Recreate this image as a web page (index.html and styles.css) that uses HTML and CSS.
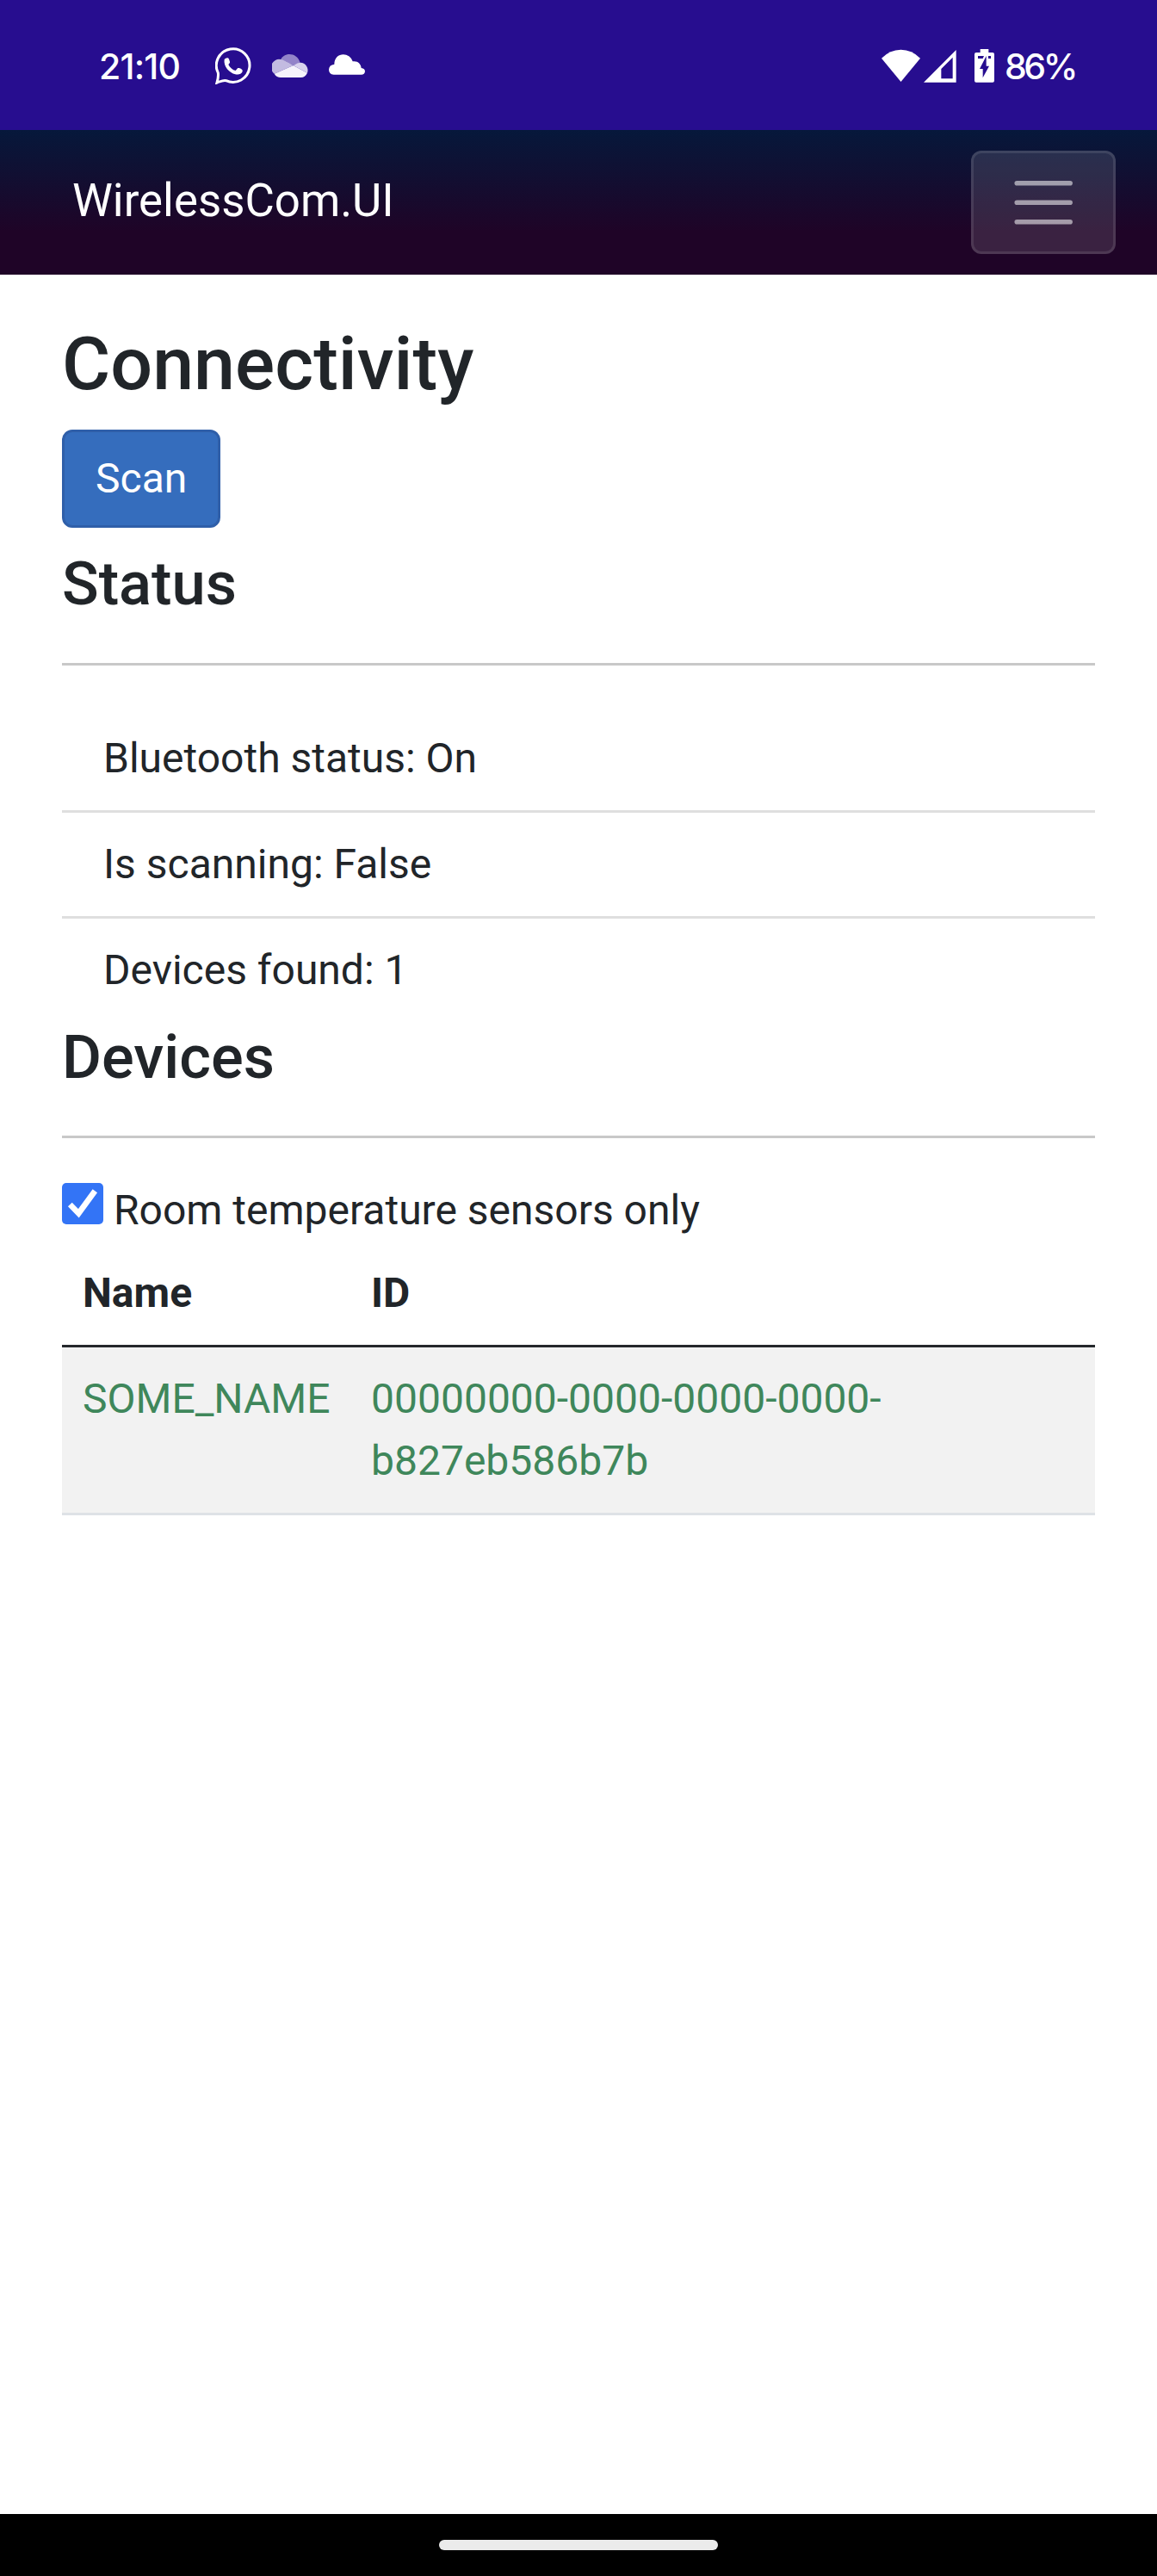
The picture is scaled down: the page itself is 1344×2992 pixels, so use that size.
FILE: index.html
```html
<!DOCTYPE html>
<html lang="en">
<head>
<meta charset="utf-8">
<title>Connectivity</title>
<link rel="stylesheet" href="styles.css">
</head>
<body>
<div class="status-bar">
  <div class="status-left">
    <span class="clock">21:10</span>
    <svg class="ico-app" viewBox="480 39 126 135" fill="none">
      <path d="M486 168Q492 147 490 134A58 58 0 1 1 518 161Q508 159 486 168Z" stroke="#fff" stroke-width="9"/>
      <path d="M512 87C517 81 525 79 528 86L531 95C532 99 528 102 526 105C531 116 541 124 551 126L558 118C561 115 576 121 575 126C576 137 559 142 550 139C530 134 508 112 512 87Z" fill="#fff"/>
    </svg>
    <svg class="ico-app" viewBox="678 39 126 135">
      <path fill="#9384c9" d="M708 89C718 61 766 61 776 99L752 108L724 93Z"/>
      <path fill="#c3bbe1" d="M708 87Q720 88 752 108L686 137A28 28 0 0 1 708 87Z"/>
      <path fill="#d8d2ed" d="M752 108Q768 98 777 98A27 27 0 0 1 801 134Z"/>
      <path fill="#f5f3fb" d="M752 108L801 134Q793 150 779 150H708Q694 150 686 137Z"/>
    </svg>
    <svg class="ico-app" viewBox="876 39 126 135">
      <path fill="#fff" d="M895 104C895 61 948 59 959 94C976 91 988 102 989 117Q1002 119 1002 129Q1001 140 989 140H893Q876 139 876 122Q877 106 895 104Z"/>
    </svg>
  </div>
  <div class="status-right">
    <svg class="ico-wifi" viewBox="72 39 135 135"><path fill="#fff" d="M72 83Q101 53 139.500 53Q178 53 207 83L139.500 165Z"/></svg>
    <svg class="ico-signal" viewBox="219 39 117 135"><path fill="#fff" fill-rule="evenodd" d="M219 167L332 54V167ZM280 154H320V80L280 120Z"/></svg>
    <svg class="ico-battery" viewBox="396 39 69 135"><path fill="#fff" fill-rule="evenodd" d="M416 51H445V63H459Q465 63 465 69V161Q465 167 459 167H402Q396 167 396 161V69Q396 63 402 63H416ZM408 75V84H425L429 75ZM444 75V84H453V75ZM437 75L414 120H425V151L447 110H437Z"/></svg>
    <span class="level">86%</span>
  </div>
</div>
<header class="navbar">
  <a class="brand">WirelessCom.UI</a>
  <button class="toggler" aria-label="Navigation menu">
    <svg viewBox="0 0 30 30"><path d="M4 7h22M4 15h22M4 23h22" stroke="rgba(255,255,255,.55)" stroke-width="2" stroke-linecap="round"/></svg>
  </button>
</header>
<main class="content">
  <h1>Connectivity</h1>
  <button class="btn">Scan</button>
  <h3>Status</h3>
  <hr>
  <ul class="list">
    <li>Bluetooth status: On</li>
    <li>Is scanning: False</li>
    <li>Devices found: 1</li>
  </ul>
  <h3>Devices</h3>
  <hr>
  <div class="filter">
    <svg class="check" viewBox="0 0 144 144"><rect width="144" height="144" rx="15" fill="#3374f6"/><path d="M28 75L58 106L115 28" fill="none" stroke="#fff" stroke-width="20"/></svg>
    <span>Room temperature sensors only</span>
  </div>
  <table>
    <thead><tr><th class="col-name">Name</th><th>ID</th></tr></thead>
    <tbody><tr><td>SOME_NAME</td><td>00000000-0000-0000-0000-<br>b827eb586b7b</td></tr></tbody>
  </table>
</main>
<footer class="gesture-bar"><div class="pill"></div></footer>
</body>
</html>
```
FILE: styles.css
```css
* { box-sizing: border-box; }

body {
  margin: 0;
  height: 2992px;
  display: flex;
  flex-direction: column;
  background: #fff;
  color: #212529;
  font-family: Roboto, "Liberation Sans", sans-serif;
  font-size: 48px;
  line-height: 1.5;
}

.status-bar {
  height: 151px;
  flex: none;
  padding: 0 96px 0 115px;
  display: flex;
  align-items: center;
  justify-content: space-between;
  background: #270d8f;
  color: #fff;
  font: 500 41px/45px Inter, sans-serif;
}

.status-left, .status-right { display: flex; align-items: center; }
.status-left { gap: 24px; }
.status-bar svg { display: block; flex: none; height: 45px; }
.clock { width: 111px; padding-top: 3px; white-space: nowrap; letter-spacing: -.8px; }
.ico-app { width: 42px; }
.ico-wifi { width: 45px; margin-right: 4px; }
.ico-signal { width: 39px; margin-right: 20px; }
.ico-battery { width: 23px; margin-right: 12px; }
.level { width: 81px; padding-top: 3px; white-space: nowrap; letter-spacing: -3.500px; }

.navbar {
  height: 168px;
  flex: none;
  padding: 0 48px 0 84px;
  display: flex;
  align-items: center;
  justify-content: space-between;
  background: linear-gradient(180deg, #06183b 0%, #1f0427 70%);
}

.brand { padding-bottom: 2px; color: #fff; font-size: 52.8px; }

.toggler {
  width: 168px;
  height: 120px;
  padding: 0;
  display: flex;
  align-items: center;
  justify-content: center;
  border: 3px solid rgba(255, 255, 255, .1);
  border-radius: 12px;
  background: rgba(255, 255, 255, .12);
}

.toggler svg { width: 84.375px; height: 84.375px; }

.content { flex: 1; padding: 51.8px 72px 0; }

h1, h3 { margin: 0; font-weight: 500; line-height: 1.2; }
h1 { margin-bottom: 25px; font-size: 86.16px; }
h3 { margin-top: -1px; font-size: 70.464px; }

.btn {
  display: block;
  margin-bottom: 24px;
  padding: 18px 36px;
  border: 3px solid #2f5fa9;
  border-radius: 12px;
  background: #356dbd;
  color: #fff;
  font: inherit;
}

hr { height: 3px; margin: 49px 0 48px; border: 0; background: #c8c8c8; }

.list { margin: 0; padding: 0; list-style: none; }
.list li { padding: 24px 48px; border-bottom: 3px solid #dfdfdf; }
.list li:last-child { border-bottom: 0; }

.filter { height: 72px; display: flex; gap: 12px; }
.check { width: 48px; height: 48px; margin-top: 4px; }

table { width: 100%; border-collapse: separate; border-spacing: 0; table-layout: fixed; }
th, td { padding: 24px; text-align: left; vertical-align: top; }
th { font-weight: 700; border-bottom: 3px solid #25282c; }
td { color: #3f875b; background: #f2f2f2; border-bottom: 3px solid #dee2e6; }
.col-name { width: 335px; }

.gesture-bar {
  height: 72px;
  flex: none;
  display: flex;
  align-items: center;
  justify-content: center;
  background: #000;
}

.pill { width: 324px; height: 12px; border-radius: 6px; background: #ebebeb; }
```
